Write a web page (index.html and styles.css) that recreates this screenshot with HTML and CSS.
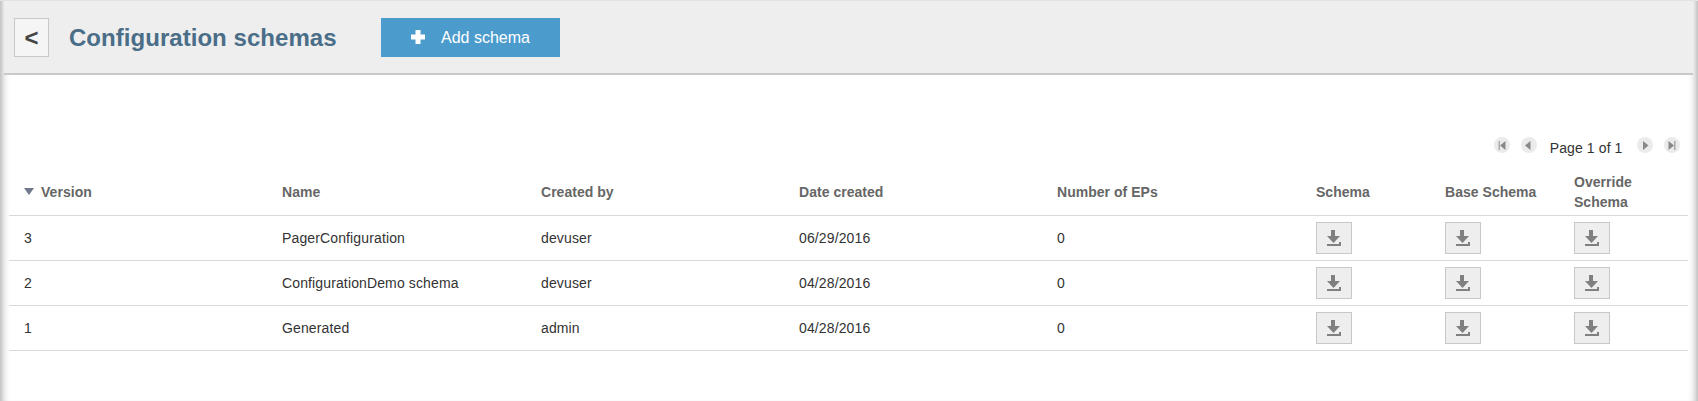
FILE: index.html
```html
<!DOCTYPE html>
<html lang="en">
<head>
<meta charset="utf-8">
<title>Configuration schemas</title>
<link rel="stylesheet" href="styles.css">
</head>
<body>
<svg class="defs" width="0" height="0">
  <symbol id="download" viewBox="0 0 14 16"><path d="M4 0h4v6h5l-6.500 7L0 6h4zM0 14h12v-2h2v4H0z"/></symbol>
</svg>
<div class="page">
  <header class="header">
    <button class="back">&lt;</button>
    <h1 class="title">Configuration schemas</h1>
    <button class="add"><svg class="plus" viewBox="0 0 14 14"><path d="M4.500 0h5v4.500H14v5H9.500V14h-5V9.500H0v-5h4.500z"/></svg><span>Add schema</span></button>
  </header>
  <main class="content">
    <nav class="pager">
      <svg class="nav" viewBox="0 0 16 16"><circle cx="8" cy="8" r="8"/><path class="bar" d="M4.500 4H6v9H4.500z"/><path d="M11.500 4v9L6 8.500z"/></svg>
      <svg class="nav" viewBox="0 0 16 16"><circle cx="8" cy="8" r="8"/><path d="M9.500 4v9L4 8.500z"/></svg>
      <span class="pages">Page 1 of 1</span>
      <svg class="nav" viewBox="0 0 16 16"><circle cx="8" cy="8" r="8"/><path d="M6 4v9l5.500-4.500z"/></svg>
      <svg class="nav" viewBox="0 0 16 16"><circle cx="8" cy="8" r="8"/><path d="M4.500 4v9L10 8.500z"/><path class="bar" d="M10 4h1.500v9H10z"/></svg>
    </nav>
    <div class="table">
      <div class="row head"><span class="sorted"><i class="sort"></i>Version</span><span>Name</span><span>Created by</span><span>Date created</span><span>Number of EPs</span><span>Schema</span><span>Base Schema</span><span>Override Schema</span></div>
      <div class="row"><span>3</span><span>PagerConfiguration</span><span>devuser</span><span>06/29/2016</span><span>0</span><span><button class="dl"><svg><use href="#download"/></svg></button></span><span><button class="dl"><svg><use href="#download"/></svg></button></span><span><button class="dl"><svg><use href="#download"/></svg></button></span></div>
      <div class="row"><span>2</span><span>ConfigurationDemo schema</span><span>devuser</span><span>04/28/2016</span><span>0</span><span><button class="dl"><svg><use href="#download"/></svg></button></span><span><button class="dl"><svg><use href="#download"/></svg></button></span><span><button class="dl"><svg><use href="#download"/></svg></button></span></div>
      <div class="row"><span>1</span><span>Generated</span><span>admin</span><span>04/28/2016</span><span>0</span><span><button class="dl"><svg><use href="#download"/></svg></button></span><span><button class="dl"><svg><use href="#download"/></svg></button></span><span><button class="dl"><svg><use href="#download"/></svg></button></span></div>
    </div>
  </main>
</div>
</body>
</html>
```

FILE: styles.css
```css
* { box-sizing: border-box; }
body { margin: 0; background: #fff; color: #333; font: 14px/20px "Liberation Sans", Arial, sans-serif; }
button { padding: 0; font-family: inherit; }
.defs { display: block; }
.page { height: 401px; padding: 1px 5px 0 4px; box-shadow: inset 0 1px #e3e3e3, inset 9px 0 8px -8px #999, inset -9px 0 8px -8px #999; }
.header { display: flex; align-items: flex-start; height: 74px; padding: 17px 0 0 10px; background: #eee; border-bottom: 2px solid #c8c8c8; }
.back { width: 35px; height: 39px; border: 1px solid #c8c8c8; background: #f5f5f5; color: #444; font-size: 24px; font-weight: bold; line-height: 35px; }
.title { width: 312px; margin: 0; padding-left: 20px; color: #4a6d88; font-size: 24px; line-height: 39px; letter-spacing: .04px; white-space: nowrap; }
.add { display: flex; align-items: center; width: 179px; height: 39px; margin-left: 20px; padding: 0 0 0 30px; gap: 16px; border: 0; background: #4b9bcd; color: #fff; font-size: 16px; }
.plus { width: 14px; height: 14px; margin-top: -1px; fill: #fff; }
.content { padding: 62px 5px 0; }
.pager { display: flex; height: 35px; justify-content: flex-end; padding-right: 8.500px; }
.nav { width: 16px; height: 16px; margin-left: 11px; }
.nav circle { fill: #ebebeb; }
.nav path { fill: #888; }
.nav .bar { fill: #aaa; }
.pages { margin: 1px 3px 0 13px; letter-spacing: .1px; }
.row { display: grid; grid-template-columns: 258px 259px 258px 258px 259px 129px 129px 1fr; align-items: center; height: 45px; border-bottom: 1px solid #d9d9d9; letter-spacing: .13px; }
.row > span { padding-left: 15px; }
.row.head { height: 44px; padding-bottom: 3px; color: #666; font-weight: bold; letter-spacing: .03px; }
.sorted { display: flex; align-items: center; }
.sort { margin: -1px 7px 0 0; border: 5px solid transparent; border-top: 7px solid #70788c; border-bottom: 0; }
.dl { display: flex; width: 36px; height: 32px; padding: 7px 0 0 10px; border: 1px solid #c8c8c8; background: #eee; }
.dl svg { width: 14px; height: 16px; fill: #808080; }
```
